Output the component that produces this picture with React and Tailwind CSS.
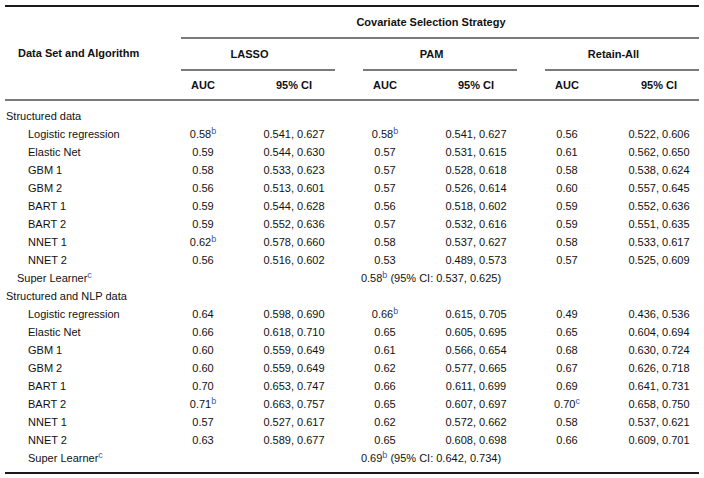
import React from "react";

const groups = ["LASSO", "PAM", "Retain-All"];

const sections = [
  {
    title: "Structured data",
    learnerIndent: "pl-[12px]",
    learner: ["0.58", "b", " (95% CI: 0.537, 0.625)"],
    rows: [
      ["Logistic regression", "0.58^b", "0.541, 0.627", "0.58^b", "0.541, 0.627", "0.56", "0.522, 0.606"],
      ["Elastic Net", "0.59", "0.544, 0.630", "0.57", "0.531, 0.615", "0.61", "0.562, 0.650"],
      ["GBM 1", "0.58", "0.533, 0.623", "0.57", "0.528, 0.618", "0.58", "0.538, 0.624"],
      ["GBM 2", "0.56", "0.513, 0.601", "0.57", "0.526, 0.614", "0.60", "0.557, 0.645"],
      ["BART 1", "0.59", "0.544, 0.628", "0.56", "0.518, 0.602", "0.59", "0.552, 0.636"],
      ["BART 2", "0.59", "0.552, 0.636", "0.57", "0.532, 0.616", "0.59", "0.551, 0.635"],
      ["NNET 1", "0.62^b", "0.578, 0.660", "0.58", "0.537, 0.627", "0.58", "0.533, 0.617"],
      ["NNET 2", "0.56", "0.516, 0.602", "0.53", "0.489, 0.573", "0.57", "0.525, 0.609"],
    ],
  },
  {
    title: "Structured and NLP data",
    learnerIndent: "pl-[23px]",
    learner: ["0.69", "b", " (95% CI: 0.642, 0.734)"],
    rows: [
      ["Logistic regression", "0.64", "0.598, 0.690", "0.66^b", "0.615, 0.705", "0.49", "0.436, 0.536"],
      ["Elastic Net", "0.66", "0.618, 0.710", "0.65", "0.605, 0.695", "0.65", "0.604, 0.694"],
      ["GBM 1", "0.60", "0.559, 0.649", "0.61", "0.566, 0.654", "0.68", "0.630, 0.724"],
      ["GBM 2", "0.60", "0.559, 0.649", "0.62", "0.577, 0.665", "0.67", "0.626, 0.718"],
      ["BART 1", "0.70", "0.653, 0.747", "0.66", "0.611, 0.699", "0.69", "0.641, 0.731"],
      ["BART 2", "0.71^b", "0.663, 0.757", "0.65", "0.607, 0.697", "0.70^c", "0.658, 0.750"],
      ["NNET 1", "0.57", "0.527, 0.617", "0.62", "0.572, 0.662", "0.58", "0.537, 0.621"],
      ["NNET 2", "0.63", "0.589, 0.677", "0.65", "0.608, 0.698", "0.66", "0.609, 0.701"],
    ],
  },
];

const gridCols = "grid grid-cols-[176px_44px_138px_44px_138px_44px_110px]";

const Sup = ({ children }) => (
  <sup className="text-[9px] text-[#3a56a8] -top-[0.5em]">{children}</sup>
);

const Value = ({ v }) => {
  const [num, mark] = v.split("^");
  return (
    <>
      {num}
      {mark && <Sup>{mark}</Sup>}
    </>
  );
};

const App = () => {
  return (
    <div className="w-[704px] h-[478px] bg-white overflow-hidden font-['Liberation_Sans',Arial,sans-serif] text-[11px] text-[#111111]">
      <div className="ml-[5px] mt-[5px] w-[694px] border-t-2 border-[#1a1a1a]">
        {/* header */}
        <div className={`${gridCols} font-bold border-b-2 border-[#7a7a7a]`}>
          <div className="row-span-3 flex items-center pl-[13px]">
            Data Set and Algorithm
          </div>
          <div className="col-span-6 h-[32px] pr-[18px] flex items-center justify-center border-b-2 border-[#7a7a7a]">
            Covariate Selection Strategy
          </div>
          {groups.map((g) => (
            <div key={g} className="col-span-2 flex flex-col">
              <div className="w-[137px] h-[30px] flex items-center justify-center">
                {g}
              </div>
              <div className="w-[154px] max-w-full h-[2px] bg-[#7a7a7a]"></div>
            </div>
          ))}
          {groups.map((g, i) => (
            <React.Fragment key={g}>
              <div className="h-[28px] flex items-center justify-center">AUC</div>
              <div
                className={`h-[28px] flex items-center justify-center ${
                  i === 2 ? "pl-[30px]" : ""
                }`}
              >
                95% CI
              </div>
            </React.Fragment>
          ))}
        </div>

        {/* body */}
        <div className="pt-[6px] pb-[5px] border-b-2 border-[#1a1a1a]">
          {sections.map((s) => (
            <div key={s.title}>
              <div className="h-[18px] leading-[18px] pl-[1px]">{s.title}</div>
              {s.rows.map((r) => (
                <div key={r[0]} className={`${gridCols} h-[18px] leading-[18px]`}>
                  <div className="pl-[23px]">{r[0]}</div>
                  {r.slice(1).map((v, j) => (
                    <div
                      key={j}
                      className={`text-center whitespace-nowrap ${
                        j === 5 ? "pl-[30px]" : ""
                      }`}
                    >
                      <Value v={v} />
                    </div>
                  ))}
                </div>
              ))}
              <div className={`${gridCols} h-[18px] leading-[18px]`}>
                <div className={s.learnerIndent}>
                  Super Learner<Sup>c</Sup>
                </div>
                <div className="col-span-6 pr-[18px] text-center whitespace-nowrap">
                  {s.learner[0]}
                  <Sup>{s.learner[1]}</Sup>
                  {s.learner[2]}
                </div>
              </div>
            </div>
          ))}
        </div>
      </div>
    </div>
  );
};

export default App;
